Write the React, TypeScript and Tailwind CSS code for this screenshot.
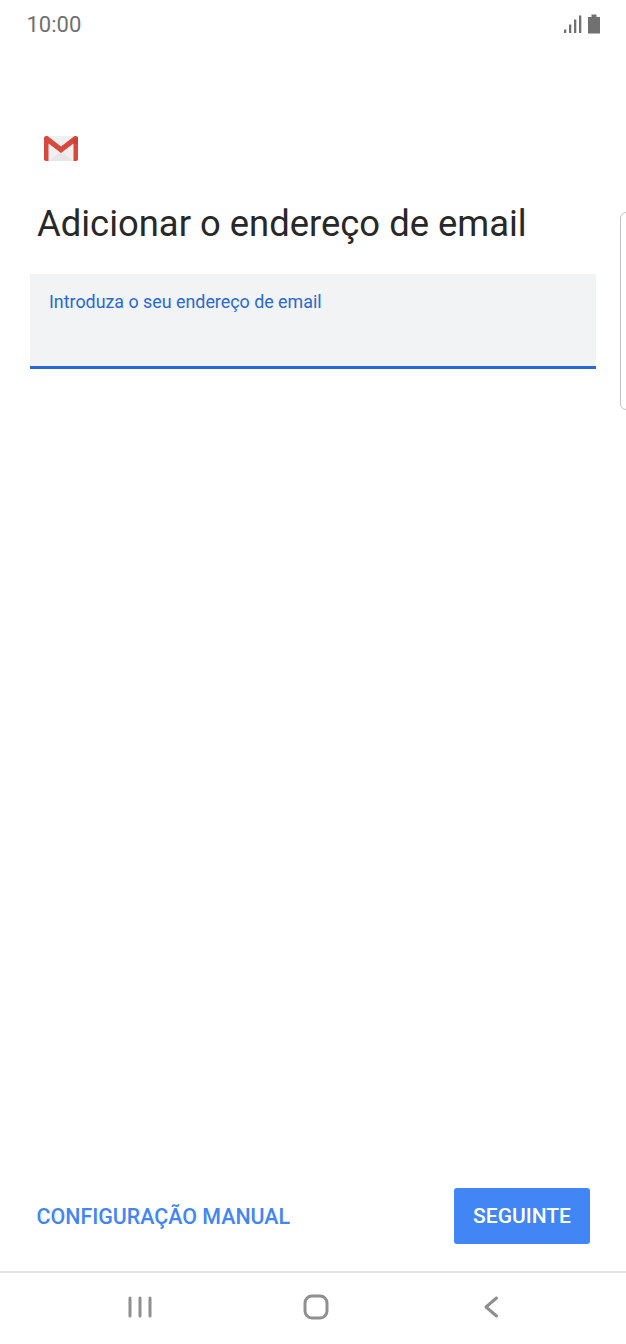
export default function App() {
  return (
    <div className="relative flex h-[1344px] w-[626px] flex-col overflow-hidden bg-white font-['Roboto',sans-serif]">
      <div className="flex h-[50px] items-center justify-between pl-[26.500px] pr-[25px]">
        <span className="text-[22px] leading-none text-[#707070]">10:00</span>
        <svg width="37" height="22" viewBox="0 0 37 22" fill="#717171" className="mb-[3px]">
          <rect x="0" y="16.500" width="2.300" height="3.500" />
          <rect x="5" y="11.500" width="2.300" height="8.500" />
          <rect x="10" y="6.500" width="2.300" height="13.500" />
          <rect x="15" y="2.500" width="2.300" height="17.500" />
          <path d="M24 4h3.500V1.500h5V4H36v16.500H24z" />
        </svg>
      </div>

      <div className="pl-[44px] pt-[86px]">
        <svg width="34" height="25" viewBox="0 0 34 25" className="block">
          <path d="M1 0h32l1 1v22.500l-1.500 1.500h-31L0 23.500V1z" fill="#f0f0f0" />
          <path d="M5 25 17 15 29 25z" fill="#e6e6e6" />
          <path d="M0 2.500C0 .8 1 0 2.500 0h1L17 10.500 30.500 0h1C33 0 34 .8 34 2.500V23c0 1.200-.8 2-2 2h-2.500V7.500L17 17 4.500 7.500V25H2c-1.200 0-2-.8-2-2z" fill="#d6493c" />
          <path d="M29.500 3 33.500 1.200 34 2.500V8l-4.500-.5z" fill="#c6423a" />
        </svg>
      </div>

      <h1 className="pl-[37px] pt-[40px] text-[36.400px] font-normal leading-[46px] text-[#282828]">
        Adicionar o endereço de email
      </h1>

      <div className="mx-[30px] mt-[27px] h-[95px] border-b-[3px] border-[#2a69cf] bg-[#f1f3f5] pl-[19px] pt-[17px]">
        <span className="block text-[17.850px] leading-[22px] text-[#2a69cf]">Introduza o seu endereço de email</span>
      </div>

      <div className="flex-1" />

      <div className="flex items-center justify-between pl-[36.500px] pr-[36px]">
        <span className="pt-[3px] text-[21.400px] font-medium text-[#4285f4]">CONFIGURAÇÃO MANUAL</span>
        <button className="h-[56px] w-[136px] rounded-[3px] bg-[#4285f4] pt-[2px] text-[21px] font-medium text-white">SEGUINTE</button>
      </div>

      <div className="mt-[27px] flex h-[73px] items-center border-t-2 border-[#e4e4e4] pb-[3px] pl-[128px]">
        <svg width="24" height="24" viewBox="0 0 24 24" fill="none" stroke="#8f8f8f" strokeWidth="3" strokeLinecap="round">
          <path d="M2 3v18M12 3v18M22 3v18" />
        </svg>
        <svg width="26" height="26" viewBox="0 0 26 26" fill="none" stroke="#8f8f8f" strokeWidth="3" className="ml-[150.500px]">
          <rect x="2" y="2" width="22" height="22" rx="7" />
        </svg>
        <svg width="16" height="24" viewBox="0 0 16 24" fill="none" stroke="#8f8f8f" strokeWidth="3" strokeLinecap="round" strokeLinejoin="round" className="ml-[154px]">
          <path d="M13.500 3 3 12l10.500 9" />
        </svg>
      </div>

      <div className="absolute left-[620px] top-[212px] h-[198px] w-[12px] rounded-[6px] border border-[#c4c4c4]" />
    </div>
  );
}
